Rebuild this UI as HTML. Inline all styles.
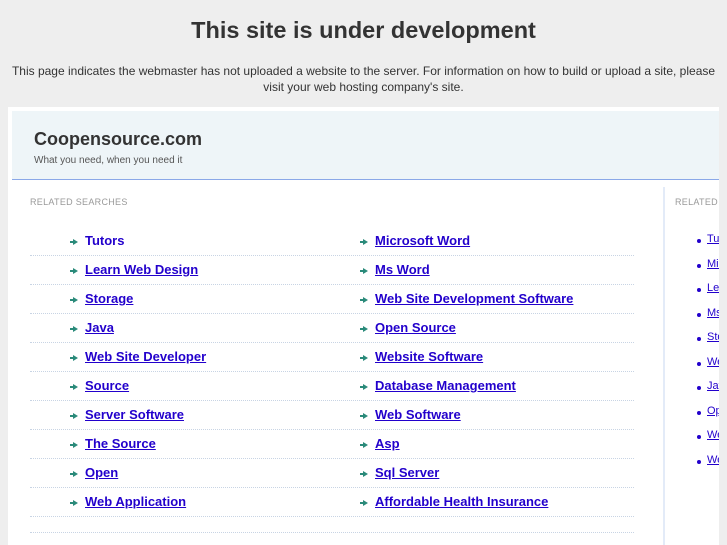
<!DOCTYPE html>
<html style="overflow:hidden"><head><style>
html,body{overflow:hidden;height:545px}
body{margin:0;background:#eeeeee;font-family:"Liberation Sans",sans-serif;width:727px;position:relative}
h1{position:absolute;top:17px;left:0;width:727px;text-align:center;margin:0;font-size:23.5px;color:#333;font-weight:bold}
.intro{position:absolute;top:63px;left:0;width:727px;text-align:center;font-size:12px;line-height:16px;color:#333}
.panel{position:absolute;left:8px;top:107px;width:711px;height:438px;background:#fff}
.hdr{position:absolute;left:4px;top:4px;width:707px;height:68px;background:#eef5f8;border-bottom:1px solid #8aa8e8}
.hdr b{position:absolute;left:22px;top:18px;font-size:18px;color:#333}
.hdr span{position:absolute;left:22px;top:44px;font-size:10px;color:#555}
.rs{position:absolute;font-size:9px;color:#999;letter-spacing:.3px}
.div{position:absolute;left:655px;top:80px;width:2px;height:380px;background:#e3ebf8}
.item{position:absolute;font-size:13px;font-weight:bold;color:#2200cc;text-decoration:underline}
.item:before{content:"";position:absolute;left:-12px;top:6px;border-left:5px solid #2a8a7a;border-top:3px solid transparent;border-bottom:3px solid transparent}
.item:after{content:"";position:absolute;left:-15px;top:8px;width:4px;height:2px;background:#2a8a7a}
.line{position:absolute;left:22px;width:604px;border-top:1px dotted #c8d4e4}
.s{position:absolute;left:699px;font-size:11px;color:#2200cc;text-decoration:underline;white-space:nowrap}
.s:before{content:"";position:absolute;left:-10px;top:6px;width:4px;height:4px;border-radius:2px;background:#2200cc}
</style></head><body>
<h1>This site is under development</h1>
<div class="intro">This page indicates the webmaster has not uploaded a website to the server. For information on how to build or upload a site, please<br>visit your web hosting company's site.</div>
<div class="panel">
<div class="hdr"><b>Coopensource.com</b><span>What you need, when you need it</span></div>
<div class="rs" style="left:22px;top:90px">RELATED SEARCHES</div>
<div class="rs" style="left:667px;top:90px">RELATED</div>
<div class="div"></div>
</div>
<div id="L"></div>
<script>
var a=["Tutors","Learn Web Design","Storage","Java","Web Site Developer","Source","Server Software","The Source","Open","Web Application"];
var b=["Microsoft Word","Ms Word","Web Site Development Software","Open Source","Website Software","Database Management","Web Software","Asp","Sql Server","Affordable Health Insurance"];
var c=["Tutors","Microsoft","Learn","Ms Word","Storage","Web Site","Java","Open","Web Site","Web"];
var h="";
for(var i=0;i<10;i++){var y=233+i*29;
h+='<div class="item" style="left:85px;top:'+y+'px'+(i==0?';text-decoration:none':'')+'">'+a[i]+'</div>';
h+='<div class="item" style="left:375px;top:'+y+'px">'+b[i]+'</div>';
h+='<div class="line" style="left:30px;top:'+(y+22)+'px"></div>';
h+='<div class="s" style="left:707px;top:'+(233+i*24.5)+'px">'+c[i]+'</div>';}
h+='<div class="line" style="left:30px;top:532px"></div>';
document.getElementById("L").innerHTML=h;
</script>
<div style="position:absolute;left:719px;top:107px;width:8px;height:438px;background:#eee"></div>
</body></html>
